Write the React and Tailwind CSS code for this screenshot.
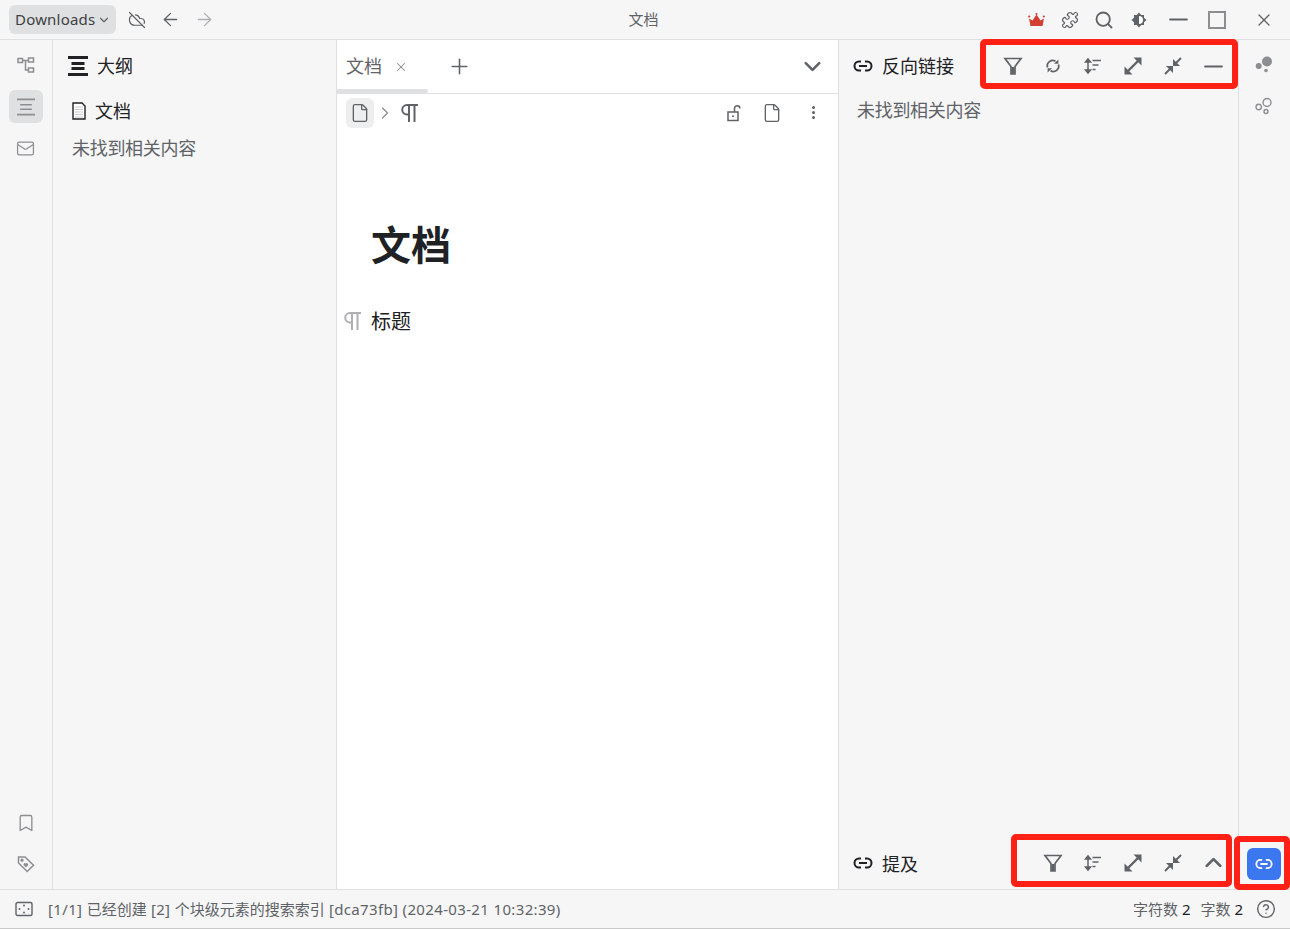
import {
  ArrowLeft,
  ArrowRight,
  Bookmark,
  ChevronDown,
  ChevronRight,
  ChevronUp,
  CircleHelp,
  CloudOff,
  File,
  Mail,
  Minus,
  Plus,
  Puzzle,
  Search,
  X,
} from 'lucide-react';

const font = { fontFamily: '"Noto Sans", "Noto Sans CJK SC", sans-serif' };

function FilterIcon({ size = 20 }) {
  return (
    <svg width={size} height={size} viewBox="0 0 20 20" fill="none" stroke="#5f6368" strokeWidth="1.7">
      <path d="M2 2.5h16l-6 8v7.5h-4v-7.5z" />
      <path d="M8.5 11h3v7h-3z" fill="#5f6368" stroke="none" />
    </svg>
  );
}

function RefreshIcon() {
  return (
    <svg width="16" height="16" viewBox="0 0 16 16" fill="none" stroke="#5f6368" strokeWidth="1.8">
      <path d="M2.5 9.5A5.5 5.5 0 0 1 10.5 3.2" />
      <path d="M13.5 6.5A5.5 5.5 0 0 1 5.5 12.8" />
      <path d="M9 5.8h4.4V1.4z" fill="#5f6368" stroke="none" />
      <path d="M7 10.2H2.6v4.4z" fill="#5f6368" stroke="none" />
    </svg>
  );
}

function SortIcon() {
  return (
    <svg width="18" height="18" viewBox="0 0 18 18" fill="none" stroke="#5f6368" strokeWidth="1.5">
      <path d="M4 2.5v13" />
      <path d="M1.5 5 4 2l2.5 3zM1.5 13 4 16l2.5-3z" fill="#5f6368" />
      <path d="M8.5 3.5h8.5M8.5 8h6M8.5 12.5h3" />
    </svg>
  );
}

function ExpandIcon() {
  return (
    <svg width="20" height="20" viewBox="0 0 20 20" fill="#5f6368" stroke="#5f6368">
      <path d="M5 15 15 5" strokeWidth="2.4" />
      <path d="M10.5 1.5h8v8z" stroke="none" />
      <path d="M1.5 10.5v8h8z" stroke="none" />
    </svg>
  );
}

function CollapseIcon() {
  return (
    <svg width="20" height="20" viewBox="0 0 20 20" fill="#5f6368" stroke="#5f6368">
      <path d="M11 9 18 2M2 18l7-7" strokeWidth="1.9" />
      <path d="M10 10V3l7 7z" stroke="none" />
      <path d="M10 10H3l7 7z" stroke="none" />
    </svg>
  );
}

function LinkIcon({ color = '#202124', size = 20 }) {
  return (
    <svg width={size} height={size} viewBox="0 0 20 20" fill="none" stroke={color} strokeWidth="2">
      <path d="M8 5.5H6a4.5 4.5 0 0 0 0 9h2M12 5.5h2a4.5 4.5 0 0 1 0 9h-2M6 10h8" />
    </svg>
  );
}

function OutlineIcon({ color, size = 20, weight = 3 }) {
  return (
    <svg width={size} height={size} viewBox="0 0 20 20" fill="none" stroke={color} strokeWidth={weight}>
      <path d="M0 1.5h20M3.5 7.5h13M3.5 12.5h13M0 18.5h20" />
    </svg>
  );
}

function PilcrowIcon({ color, width = 17, height = 19 }) {
  return (
    <svg width={width} height={height} viewBox="0 0 17 19" fill="none" stroke={color} strokeWidth="2">
      <path d="M17 2H6a4.5 4.5 0 0 0 0 9.5h2" />
      <path d="M8 1v18M13.5 1v18" />
    </svg>
  );
}

function TreeIcon() {
  return (
    <svg width="18" height="18" viewBox="0 0 18 18" fill="none" stroke="#8c8e91" strokeWidth="1.5">
      <path d="M1 2.5h4.5v4H1zM11.5 2h5v4h-5zM11.5 12h5v4h-5z" />
      <path d="M5.5 4.5h6M8.5 4.5V14h3" />
    </svg>
  );
}

function TagIcon() {
  return (
    <svg width="18" height="18" viewBox="0 0 18 18" fill="none" stroke="#8c8e91" strokeWidth="1.5">
      <path d="M1.5 2h6.5l8.5 8.2-6.3 6.3L1.5 8z" />
      <circle cx="5" cy="5.2" r="0.9" fill="#8c8e91" />
      <path d="M9 12.5 6.8 10.3a1.3 1.3 0 0 1 2-1.7 1.3 1.3 0 0 1 2 1.8z" fill="#8c8e91" stroke="none" />
    </svg>
  );
}

function DocIcon() {
  return (
    <svg width="16" height="18" viewBox="0 0 16 18" fill="none">
      <path d="M2 1h9l3 3v13H2z" fill="#fff" stroke="#202124" strokeWidth="1.4" />
      <path d="M4 5h8M4 7.5h8M4 10h8M4 12.5h8M4 15h8" stroke="#c9c9c9" />
    </svg>
  );
}

function LockOpenIcon() {
  return (
    <svg width="16" height="18" viewBox="0 0 16 18" fill="none" stroke="#5f6368" strokeWidth="1.5">
      <path d="M2 8h10v8.5H2z" />
      <path d="M8.5 8V4.5a2.7 2.7 0 0 1 5.4 0" />
      <circle cx="7" cy="12.2" r="1" fill="#5f6368" stroke="none" />
    </svg>
  );
}

function CrownIcon() {
  return (
    <svg width="17" height="14" viewBox="0 0 17 14" fill="#d23f31">
      <path d="M1 5.5 4.5 7.5 8.5 1.5 12.5 7.5 16 5.5 14.5 13h-12z" />
      <circle cx="1.2" cy="3.5" r="1.1" />
      <circle cx="8.5" cy="1" r="1" />
      <circle cx="15.8" cy="3.5" r="1.1" />
    </svg>
  );
}

function ThemeIcon() {
  return (
    <svg width="18" height="18" viewBox="0 0 18 18">
      <path d="M9 1.5 11.2 4H14v2.8L16.5 9 14 11.2V14h-2.8L9 16.5 6.8 14H4v-2.8L1.5 9 4 6.8V4h2.8z" fill="#5f6368" />
      <path d="M9 5a4 4 0 0 1 0 8z" fill="#fff" />
    </svg>
  );
}

function BubblesIcon({ solid }) {
  const props = solid
    ? { fill: '#8c8e91', stroke: 'none' }
    : { fill: 'none', stroke: '#8c8e91', strokeWidth: 1.4 };
  return (
    <svg width="18" height="18" viewBox="0 0 18 18" {...props}>
      <circle cx="12" cy="5.5" r={solid ? 5 : 4} />
      <circle cx="3.7" cy="10" r={solid ? 3 : 2.7} />
      <circle cx="11" cy="14.5" r={solid ? 1.8 : 2} />
    </svg>
  );
}

function SpaceIcon() {
  return (
    <svg width="18" height="16" viewBox="0 0 18 16" fill="none" stroke="#5f6368" strokeWidth="1.4">
      <rect x="1" y="1.5" width="16" height="13" rx="1.5" />
      <g fill="#5f6368" stroke="none">
        <circle cx="9" cy="4.5" r="1" />
        <circle cx="9" cy="11.5" r="1" />
        <circle cx="4.5" cy="8" r="1" />
        <circle cx="13.5" cy="8" r="1" />
      </g>
    </svg>
  );
}

// the red marks drawn on top of the screenshot
function RedMark({ className }) {
  return <div className={`absolute border-[6px] border-[#ff2016] rounded-[5px] ${className}`} />;
}

function IconSlot({ className = 'w-10', children }) {
  return <div className={`flex items-center justify-center h-10 ${className}`}>{children}</div>;
}

export default function App() {
  return (
    <div className="relative flex flex-col w-[1290px] h-[929px] overflow-hidden bg-[#f6f6f6] text-[#202124]" style={font}>
      {/* Title bar */}
      <header className="flex items-center h-10 shrink-0 border-b border-[#dfe0e1]">
        <div className="flex items-center ml-[9px] pl-[6px] pr-[2px] h-[29px] w-[107px] rounded-md bg-[#dfe0e1] text-[15px] tracking-[0.2px] text-[#3c4043]">
          Downloads
          <ChevronDown size={14} className="ml-[2px] text-[#5f6368]" />
        </div>
        <CloudOff size={18} strokeWidth={1.6} className="ml-[12px] text-[#5f6368]" />
        <ArrowLeft size={21} strokeWidth={1.5} className="ml-[14px] text-[#5f6368]" />
        <ArrowRight size={21} strokeWidth={1.5} className="ml-[13px] text-[#aeb0b3]" />
        <div className="flex-1 text-center text-[15px] text-[#5f6368] pl-[44px]">文档</div>
        <CrownIcon />
        <Puzzle size={18} strokeWidth={1.6} className="ml-[16px] text-[#5f6368]" />
        <Search size={20} strokeWidth={2.2} className="ml-[15px] text-[#5f6368]" />
        <div className="ml-[16px]">
          <ThemeIcon />
        </div>
        <Minus size={29} strokeWidth={1.5} className="ml-[16px] text-[#5f6368]" />
        <div className="w-[18px] h-[18px] ml-[15px] border-2 border-[#8c8e91]" />
        <X size={20} strokeWidth={1.6} className="ml-[28px] mr-[16px] text-[#5f6368]" />
      </header>

      <div className="flex flex-1 min-h-0">
        {/* Left rail */}
        <aside className="flex flex-col items-center w-[53px] pr-[1px] shrink-0 pt-[8px] pb-[8px] border-r border-[#dfe0e1]">
          <div className="flex items-center justify-center w-[34px] h-[34px]">
            <TreeIcon />
          </div>
          <div className="flex items-center justify-center w-[34px] h-[33px] mt-[8px] rounded-md bg-[#dfe0e1]">
            <OutlineIcon color="#8c8e91" size={18} weight={1.8} />
          </div>
          <div className="flex items-center justify-center w-[34px] h-[34px] mt-[8px]">
            <Mail size={19} strokeWidth={1.6} className="text-[#8c8e91]" />
          </div>
          <div className="flex-1" />
          <div className="flex items-center justify-center w-[34px] h-[34px]">
            <Bookmark size={20} strokeWidth={1.6} className="text-[#8c8e91]" />
          </div>
          <div className="flex items-center justify-center w-[34px] h-[34px] mt-[7px]">
            <TagIcon />
          </div>
        </aside>

        {/* Outline panel */}
        <section className="w-[284px] shrink-0 border-r border-[#dfe0e1]">
          <div className="flex items-center h-[52px] pl-[15px]">
            <OutlineIcon color="#202124" />
            <span className="ml-[9px] text-[18px]">大纲</span>
          </div>
          <div className="flex items-center h-[36px] mt-[1px] pl-[18px]">
            <DocIcon />
            <span className="ml-[8px] text-[18px]">文档</span>
          </div>
          <div className="mt-[1px] pl-[19px] text-[18px] leading-[36px] tracking-[-0.3px] text-[#5f6368]">未找到相关内容</div>
        </section>

        {/* Editor */}
        <main className="flex flex-col w-[502px] shrink-0 bg-white border-r border-[#dfe0e1]">
          <div className="relative flex items-center h-[54px] border-b border-[#dfe0e1]">
            <span className="ml-[9px] text-[18px] text-[#5f6368]">文档</span>
            <X size={14} strokeWidth={1.8} className="ml-[12px] text-[#8c8e91]" />
            <Plus size={25} strokeWidth={1.5} className="ml-[39px] text-[#5f6368]" />
            <ChevronDown size={27} strokeWidth={2.3} className="ml-auto mr-[12px] text-[#5f6368]" />
            <div className="absolute left-0 bottom-0 w-[91px] h-[4px] rounded-r-sm bg-[#dfe0e1]" />
          </div>
          <div className="flex items-center h-[37px] pl-[9px]">
            <div className="flex items-center justify-center w-[28px] h-[30px] rounded-md bg-[#eeeeee]">
              <File size={20} strokeWidth={1.6} className="text-[#5f6368]" />
            </div>
            <ChevronRight size={20} strokeWidth={1.6} className="ml-[1px] text-[#8c8e91]" />
            <div className="ml-[6px]">
              <PilcrowIcon color="#5f6368" />
            </div>
            <div className="ml-auto">
              <LockOpenIcon />
            </div>
            <File size={20} strokeWidth={1.6} className="ml-[20px] text-[#5f6368]" />
            <div className="flex flex-col gap-[2px] ml-[30px] mr-[23px]">
              <span className="w-[3px] h-[3px] rounded-full bg-[#5f6368]" />
              <span className="w-[3px] h-[3px] rounded-full bg-[#5f6368]" />
              <span className="w-[3px] h-[3px] rounded-full bg-[#5f6368]" />
            </div>
          </div>
          <h1 className="mt-[84px] pl-[34px] text-[40px] leading-[60px] font-bold">文档</h1>
          <div className="flex items-center mt-[29px] h-[36px]">
            <div className="ml-[7px] mt-[-4px]">
              <PilcrowIcon color="#aeb0b3" />
            </div>
            <span className="ml-[10px] text-[20px]">标题</span>
          </div>
        </main>

        {/* Backlinks panel */}
        <section className="flex flex-col flex-1 min-w-0 border-r border-[#dfe0e1]">
          <div className="flex items-center h-[52px] pl-[14px]">
            <LinkIcon />
            <span className="ml-[9px] text-[18px]">反向链接</span>
            <div className="flex items-center ml-auto mr-[5px]">
              <IconSlot><FilterIcon /></IconSlot>
              <IconSlot><RefreshIcon /></IconSlot>
              <IconSlot><SortIcon /></IconSlot>
              <IconSlot><ExpandIcon /></IconSlot>
              <IconSlot><CollapseIcon /></IconSlot>
              <IconSlot><Minus size={29} strokeWidth={1.5} className="text-[#5f6368] shrink-0" /></IconSlot>
            </div>
          </div>
          <div className="pl-[18px] text-[18px] leading-[36px] tracking-[-0.3px] text-[#5f6368]">未找到相关内容</div>
          <div className="flex items-center h-[52px] mt-auto pl-[14px]">
            <LinkIcon />
            <span className="ml-[9px] text-[18px] mt-[2px]">提及</span>
            <div className="flex items-center ml-auto mr-[5px] mt-[-1px]">
              <IconSlot><FilterIcon /></IconSlot>
              <IconSlot><SortIcon /></IconSlot>
              <IconSlot><ExpandIcon /></IconSlot>
              <IconSlot><CollapseIcon /></IconSlot>
              <IconSlot><ChevronUp size={27} strokeWidth={2.5} className="text-[#5f6368] shrink-0" /></IconSlot>
            </div>
          </div>
        </section>

        {/* Right rail */}
        <aside className="flex flex-col items-center w-[51px] pr-[2px] shrink-0 pt-[7px] pb-[9px]">
          <div className="flex items-center justify-center h-[34px] mt-[1px]"><BubblesIcon solid /></div>
          <div className="flex items-center justify-center h-[34px] mt-[7px]"><BubblesIcon /></div>
          <div className="flex items-center justify-center w-[34px] h-[32px] mt-auto rounded-md bg-[#3b78f0]">
            <LinkIcon color="#ffffff" size={18} />
          </div>
        </aside>
      </div>

      {/* Status bar */}
      <footer className="flex items-center h-[40px] shrink-0 pl-[15px] pr-[14px] border-t border-b border-[#dfe0e1] border-b-[#c9c9c9] text-[15px] text-[#5f6368]">
        <SpaceIcon />
        <span className="ml-[15px]">
          <span className="tracking-[0.35px]">[1/1] </span>已经创建<span className="tracking-[0.35px]"> [2] </span>个块级元素的搜索索引
          <span className="tracking-[0.35px]"> [dca73fb] (2024-03-21 10:32:39)</span>
        </span>
        <span className="ml-auto">字符数 <span className="text-[#202124]">2</span></span>
        <span className="ml-[10px]">字数 <span className="text-[#202124]">2</span></span>
        <CircleHelp size={20} strokeWidth={1.7} className="ml-[13px]" />
      </footer>

      <RedMark className="left-[980px] top-[39px] w-[258px] h-[50px]" />
      <RedMark className="left-[1011px] top-[834px] w-[221px] h-[53px]" />
      <RedMark className="left-[1234px] top-[836px] w-[56px] h-[54px]" />
    </div>
  );
}
